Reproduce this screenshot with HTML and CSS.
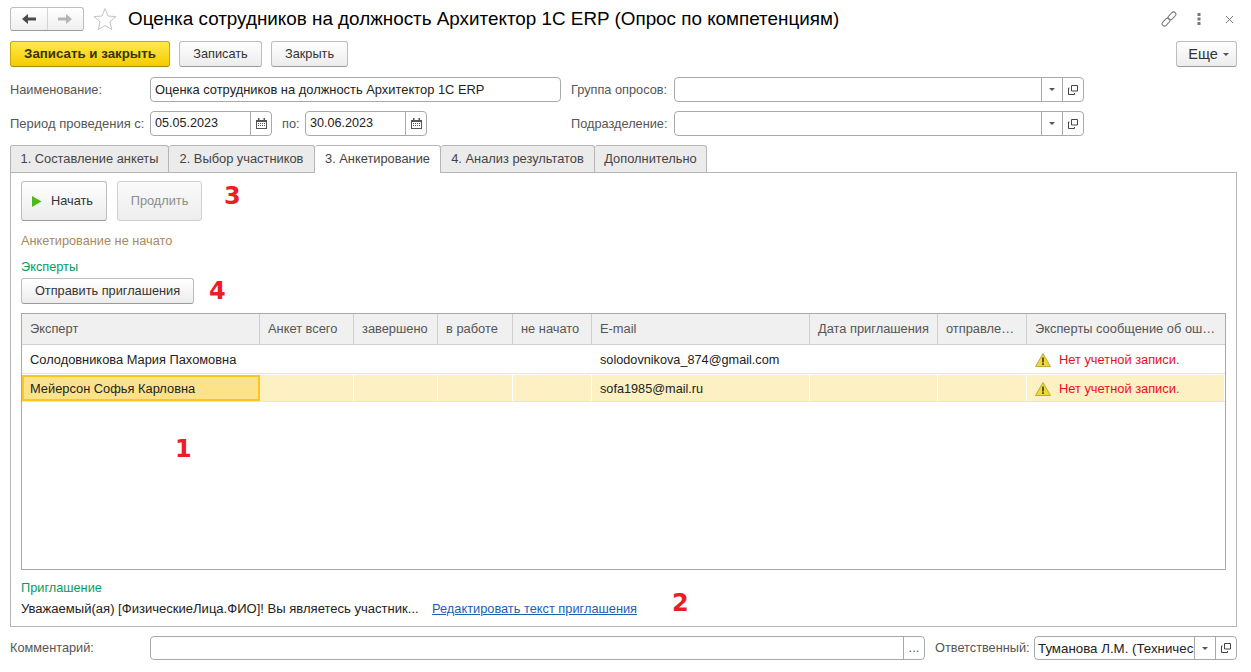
FILE: index.html
```html
<!DOCTYPE html>
<html lang="ru">
<head>
<meta charset="utf-8">
<title>Оценка сотрудников</title>
<link rel="stylesheet" href="styles.css">
</head>
<body>
<div class="page">
  <header class="titlebar">
    <div class="nav">
      <button class="nav-btn"><svg width="16" height="12" viewBox="0 0 16 12"><path d="M1 6l6-5v3.500h8v3H7V11z" fill="#4a4a4a"/></svg></button>
      <button class="nav-btn"><svg width="16" height="12" viewBox="0 0 16 12"><path d="M15 6L9 1v3.500H1v3h8V11z" fill="#b4b4b4"/></svg></button>
    </div>
    <svg class="star" width="24" height="24" viewBox="0 0 24 24"><path d="M12 1.500l3 7.500 8 .6-6.100 5.200 1.900 7.800L12 18.400 5.200 22.600l1.900-7.800L1 9.600 9 9z" fill="#fff" stroke="#c4c4c4" stroke-width="1"/></svg>
    <h1 class="title">Оценка сотрудников на должность Архитектор 1С ERP (Опрос по компетенциям)</h1>
    <div class="win-icons">
      <svg class="link-ic" width="16" height="16" viewBox="0 0 16 16" fill="none" stroke="#777" stroke-width="1"><rect x="0.500" y="8.800" width="9" height="4.600" rx="2.300" transform="rotate(-45 5 11.100)"/><rect x="6.500" y="2.600" width="9" height="4.600" rx="2.300" transform="rotate(-45 11 4.900)"/></svg>
      <svg width="4" height="14" viewBox="0 0 4 14" fill="#777"><rect x="0.500" y="1" width="3" height="3"/><rect x="0.500" y="5.500" width="3" height="3"/><rect x="0.500" y="10" width="3" height="3"/></svg>
      <svg width="9" height="9" viewBox="0 0 9 9" stroke="#777" stroke-width="1"><path d="M1 1l7 7M8 1L1 8"/></svg>
    </div>
  </header>

  <div class="toolbar">
    <button class="btn primary">Записать и закрыть</button>
    <button class="btn w83">Записать</button>
    <button class="btn w77">Закрыть</button>
    <button class="btn more">Еще <i class="caret"></i></button>
  </div>

  <div class="form-row first">
    <label class="lbl lbl-main">Наименование:</label>
    <div class="field w411"><span class="val">Оценка сотрудников на должность Архитектор 1С ERP</span></div>
    <label class="lbl lbl-side">Группа опросов:</label>
    <div class="field w410">
      <span class="val"></span>
      <span class="fb"><i class="caret"></i></span>
      <span class="fb"><svg class="open" width="10" height="10" viewBox="0 0 10 10" fill="none" stroke="#444"><path d="M3.500 .5h6v5.500h-6zM1.500 3H.5v6.500h6V8" /></svg></span>
    </div>
  </div>
  <div class="form-row">
    <label class="lbl lbl-main lbl-period">Период проведения с:</label>
    <div class="field w122">
      <span class="val date">05.05.2023</span>
      <span class="fb"><svg width="11" height="11" viewBox="0 0 11 11"><path d="M0 2h11v9H0z" fill="#555"/><path d="M1 4h9v6H1z" fill="#fff"/><path d="M2 0h1.500v3H2zM7.500 0H9v3H7.500zM2 5h1v1H2zM4 5h1v1H4zM6 5h1v1H6zM8 5h1v1H8zM2 7h1v1H2zM4 7h1v1H4zM6 7h1v1H6zM8 7h1v1H8z" fill="#555"/></svg></span>
    </div>
    <label class="lbl lbl-to">по:</label>
    <div class="field w122">
      <span class="val date">30.06.2023</span>
      <span class="fb"><svg width="11" height="11" viewBox="0 0 11 11"><path d="M0 2h11v9H0z" fill="#555"/><path d="M1 4h9v6H1z" fill="#fff"/><path d="M2 0h1.500v3H2zM7.500 0H9v3H7.500zM2 5h1v1H2zM4 5h1v1H4zM6 5h1v1H6zM8 5h1v1H8zM2 7h1v1H2zM4 7h1v1H4zM6 7h1v1H6zM8 7h1v1H8z" fill="#555"/></svg></span>
    </div>
    <label class="lbl lbl-side2">Подразделение:</label>
    <div class="field w410">
      <span class="val"></span>
      <span class="fb"><i class="caret"></i></span>
      <span class="fb"><svg class="open" width="10" height="10" viewBox="0 0 10 10" fill="none" stroke="#444"><path d="M3.500 .5h6v5.500h-6zM1.500 3H.5v6.500h6V8" /></svg></span>
    </div>
  </div>

  <nav class="tabs">
    <div class="tab t1">1. Составление анкеты</div>
    <div class="tab t2">2. Выбор участников</div>
    <div class="tab t3 active">3. Анкетирование</div>
    <div class="tab t4">4. Анализ результатов</div>
    <div class="tab t5">Дополнительно</div>
  </nav>

  <main class="panel">
    <div class="actions">
      <button class="btn tall start"><svg width="10" height="11" viewBox="0 0 10 11"><path d="M0 0l9.500 5.500L0 11z" fill="#4fb81a"/></svg><span>Начать</span></button>
      <button class="btn tall disabled">Продлить</button>
      <span class="mark m3">3</span>
    </div>
    <div class="status">Анкетирование не начато</div>
    <div class="group">Эксперты</div>
    <div class="send-row">
      <button class="btn send">Отправить приглашения</button>
      <span class="mark m4">4</span>
    </div>

    <div class="table">
      <div class="tr head">
        <div class="c c1">Эксперт</div>
        <div class="c c2">Анкет всего</div>
        <div class="c c3">завершено</div>
        <div class="c c4">в работе</div>
        <div class="c c5">не начато</div>
        <div class="c c6">E-mail</div>
        <div class="c c7">Дата приглашения</div>
        <div class="c c8">отправле…</div>
        <div class="c c9">Эксперты сообщение об ош…</div>
      </div>
      <div class="tr">
        <div class="c c1">Солодовникова Мария Пахомовна</div>
        <div class="c c2"></div><div class="c c3"></div><div class="c c4"></div><div class="c c5"></div>
        <div class="c c6 mail">solodovnikova_874@gmail.com</div>
        <div class="c c7"></div><div class="c c8"></div>
        <div class="c c9 err"><svg width="16" height="14" viewBox="0 0 16 14"><path d="M8 .5l7.500 13H.5z" fill="#f2d82c" stroke="#a89a3a" stroke-width=".8"/><path d="M7.200 4.500h1.600v5H7.200zM7.200 10.300h1.600v1.600H7.200z" fill="#333"/></svg>Нет учетной записи.</div>
      </div>
      <div class="tr selected">
        <div class="c c1 focus">Мейерсон Софья Карловна</div>
        <div class="c c2"></div><div class="c c3"></div><div class="c c4"></div><div class="c c5"></div>
        <div class="c c6 mail">sofa1985@mail.ru</div>
        <div class="c c7"></div><div class="c c8"></div>
        <div class="c c9 err"><svg width="16" height="14" viewBox="0 0 16 14"><path d="M8 .5l7.500 13H.5z" fill="#f2d82c" stroke="#a89a3a" stroke-width=".8"/><path d="M7.200 4.500h1.600v5H7.200zM7.200 10.300h1.600v1.600H7.200z" fill="#333"/></svg>Нет учетной записи.</div>
      </div>
      <span class="mark m1">1</span>
    </div>

    <div class="group invite">Приглашение</div>
    <div class="invite-row">
      <span class="invite-text">Уважаемый(ая) [ФизическиеЛица.ФИО]! Вы являетесь участник...</span>
      <a class="link" href="#">Редактировать текст приглашения</a>
      <span class="mark m2">2</span>
    </div>
  </main>

  <div class="form-row bottom">
    <label class="lbl lbl-main">Комментарий:</label>
    <div class="field w775">
      <span class="val"></span>
      <span class="fb dots">...</span>
    </div>
    <label class="lbl lbl-resp">Ответственный:</label>
    <div class="field w203">
      <span class="val resp">Туманова Л.М. (Технический директор)</span>
      <span class="fb"><i class="caret"></i></span>
      <span class="fb"><svg class="open" width="10" height="10" viewBox="0 0 10 10" fill="none" stroke="#444"><path d="M3.500 .5h6v5.500h-6zM1.500 3H.5v6.500h6V8" /></svg></span>
    </div>
  </div>
</div>
</body>
</html>
```
FILE: styles.css
```css
* { box-sizing: border-box; }
html, body { margin: 0; padding: 0; background: #fff; }
body { font: 13px/1 "Liberation Sans", Arial, sans-serif; color: #333; }
.page { width: 1251px; height: 672px; padding: 0 14px 0 10px; overflow: hidden; position: relative; }

.titlebar { display: flex; align-items: center; height: 24px; margin-top: 7px; }
.nav { display: flex; width: 74px; height: 24px; border: 1px solid #bdbdbd; border-bottom-color: #9a9a9a; border-radius: 3px; background: linear-gradient(#fff, #efefef); }
.nav-btn { flex: 1; border: 0; padding: 0; background: none; display: flex; align-items: center; justify-content: center; }
.nav-btn + .nav-btn { border-left: 1px solid #d4d4d4; }
.star { margin-left: 9px; margin-right: 11px; }
.title { margin: 0; font-size: 18.850px; font-weight: 400; color: #000; flex: 1; white-space: nowrap; }
.win-icons { display: flex; align-items: center; gap: 24px; padding-right: 3px; }
.win-icons svg { display: block; }
.link-ic { margin-right: -4px; }

.toolbar { display: flex; gap: 9px; margin-top: 10px; height: 26px; }
.btn { font: inherit; font-size: 12.750px; color: #333; height: 26px; padding: 0; border: 1px solid #bdbdbd; border-bottom-color: #9a9a9a; border-radius: 3px; background: linear-gradient(#fff, #ececec); white-space: nowrap; }
.primary { width: 160px; font-size: 13.300px; font-weight: 700; color: #3c3200; background: linear-gradient(#ffe94f, #f5cc00); border-color: #c7a900; border-bottom-color: #a08a00; }
.w83 { width: 83px; }
.w77 { width: 77px; }
.more { width: 61px; margin-left: auto; font-size: 14.500px; display: flex; align-items: center; justify-content: center; gap: 5px; padding-left: 4px; }
.caret { display: inline-block; width: 0; height: 0; border: 3px solid transparent; border-top: 3px solid #555; border-bottom: 0; }

.form-row { display: flex; align-items: center; height: 25px; margin-top: 9px; }
.form-row.first { margin-top: 10px; }
.lbl { color: #555; white-space: nowrap; font-size: 12.750px; padding-top: 1px; }
.lbl.lbl-period { font-size: 13px; padding-top: 0; }
.lbl-main { width: 140px; }
.lbl-side { width: 103px; margin-left: 10px; }
.lbl-side2 { width: 103px; margin-left: 144px; }
.lbl-to { margin-left: 10px; width: 23px; }
.lbl-resp { width: 99px; margin-left: 10px; }
.field { display: flex; height: 25px; border: 1px solid #a9a9a9; border-radius: 4px; background: #fff; overflow: hidden; }
.val { flex: 1; min-width: 0; padding: 0 4px; font-size: 12.900px; line-height: 23px; color: #222; white-space: nowrap; overflow: hidden; }
.date { font-size: 12.600px; }
.fb { width: 21px; border-left: 1px solid #a9a9a9; display: flex; align-items: center; justify-content: center; }
.fb svg { display: block; }
.dots { color: #555; align-items: flex-end; padding-bottom: 5px; line-height: 1; }
.w411 { width: 411px; }
.w410 { width: 410px; }
.w122 { width: 122px; }
.w775 { width: 775px; }
.w203 { width: 203px; }

.tabs { display: flex; margin-top: 9px; height: 28px; position: relative; z-index: 1; }
.tab { height: 27px; line-height: 26px; font-size: 12.850px; text-align: center; background: #ebebeb; border: 1px solid #b5b5b5; border-left-width: 0; border-bottom: 0; border-radius: 3px 3px 0 0; color: #444; white-space: nowrap; }
.t1 { width: 159px; border-left-width: 1px; }
.t2 { width: 146px; }
.t3 { width: 126px; }
.t4 { width: 154px; }
.t5 { width: 112px; }
.tab.active { height: 28px; background: #fff; }

.panel { height: 455px; margin-top: -1px; border: 1px solid #b5b5b5; padding: 8px 10px 0; position: relative; width: 1227px; }
.actions { display: flex; gap: 10px; height: 41px; position: relative; }
.tall { height: 40px; width: 86px; display: flex; align-items: center; justify-content: center; }
.start { gap: 9px; padding-right: 3px; }
.start span { color: #333; }
.disabled { width: 85px; color: #8c8c8c; background: linear-gradient(#fafafa, #ededed); border-color: #cfcfcf; }
.status { color: #a88a5a; margin-top: 13px; height: 13px; line-height: 12px; font-size: 12.750px; }
.group { color: #0a9b63; margin-top: 13px; height: 13px; line-height: 12px; font-size: 12.750px; }
.send-row { margin-top: 4px; height: 26px; position: relative; }
.send { width: 173px; }

.table { margin-top: 9px; width: 1205px; height: 257px; border: 1px solid #a9a9a9; position: relative; }
.tr { display: flex; height: 29px; border-bottom: 1px solid #e4e4e4; }
.tr.head { height: 31px; border-bottom: 1px solid #cfcfcf; background: #f0f0f0; }
.tr.head .c { color: #555; line-height: 29px; border-right: 1px solid #cfcfcf; }
.tr.head .c9 { border-right: 0; }
.c { flex: none; padding-left: 8px; font-size: 12.850px; line-height: 29px; white-space: nowrap; overflow: hidden; border-right: 1px solid transparent; color: #222; }
.mail { font-size: 12.700px; padding-top: 1px; }
.c1 { width: 238px; }
.c2 { width: 94px; }
.c3 { width: 84px; }
.c4 { width: 75px; }
.c5 { width: 79px; }
.c6 { width: 218px; }
.c7 { width: 128px; }
.c8 { width: 89px; }
.c9 { width: 198px; }
.err { color: #f00b1e; display: flex; align-items: center; gap: 8px; padding-top: 1px; }
.err svg { flex: none; }
.tr.selected { background: #fdf1c3; margin-top: 1px; height: 27px; }
.selected .c { border-right-color: #fff; line-height: 27px; }
.selected .focus { background: #fde28c; border: 2px solid #fbc71e; padding-left: 6px; line-height: 23px; }

.invite { margin-top: 12px; }
.invite-row { display: flex; align-items: center; margin-top: 7px; height: 14px; position: relative; }
.invite-text { width: 411px; font-size: 13.050px; color: #222; white-space: nowrap; }
.link { color: #1d5fb5; text-decoration: underline; font-size: 12.800px; }

.form-row.bottom { margin-top: 9px; height: 24px; }
.bottom .field { height: 24px; }
.bottom .val { line-height: 23px; }
.val.resp { padding-right: 0; padding-left: 3px; font-size: 13.300px; }

.mark { position: absolute; color: #ee1c25; font: 700 24px/1 "DejaVu Sans", sans-serif; }
.m1 { left: 153px; top: 123px; }
.m2 { left: 651px; top: -11px; }
.m3 { left: 203px; top: 3px; }
.m4 { left: 188px; top: 1px; }
```
